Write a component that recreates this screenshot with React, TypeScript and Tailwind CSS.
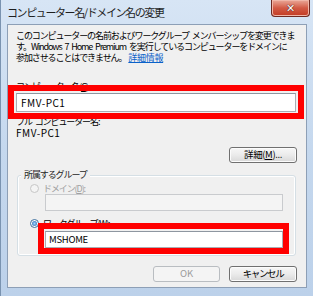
import type { ReactNode } from "react";

const jp = "font-['Noto_Sans_CJK_JP','Noto_Sans',sans-serif]";

function Button({ children, disabled }: { children: ReactNode; disabled?: boolean }) {
  return (
    <div
      className={
        disabled
          ? "w-[67px] h-[16px] rounded-[3px] border border-[#b9bdc1] bg-[#f4f4f4] text-[#9b9b9b] flex items-center justify-center text-[9.5px] leading-none"
          : "w-[68px] h-[16px] rounded-[3px] border border-[#707070] bg-linear-to-b from-[#f7f7f7] via-[#ebebeb] to-[#d8d8d8] text-black flex items-center justify-center text-[9.5px] leading-none shadow-[inset_0_0_0_1px_#fcfcfc]"
      }
    >
      {children}
    </div>
  );
}

function Radio({ checked, disabled }: { checked?: boolean; disabled?: boolean }) {
  if (disabled) {
    return <div className="w-[9px] h-[9px] rounded-full border border-[#c6c6c6] bg-[#f4f4f4]" />;
  }
  return (
    <div className="w-[9px] h-[9px] rounded-full border border-[#3d6f9e] bg-white flex items-center justify-center">
      {checked && <div className="w-[5px] h-[5px] rounded-full bg-radial from-[#9fd4ff] to-[#1b5fa8]" />}
    </div>
  );
}

export default function App() {
  return (
    <div className={`w-[313px] h-[296px] overflow-hidden bg-linear-to-b from-[#d7e5f5] via-[#c5d8ee] to-[#bcd1ea] border-l border-[#7a93b0] ${jp} text-black`}>
      {/* title bar */}
      <div className="h-[24px] flex justify-between">
        <div className="pl-[6px] pt-[5px] text-[11px] leading-[14px] tracking-[-1.4px] text-[#1e1e1e] whitespace-nowrap">
          コンピューター名/ドメイン名の変更
        </div>
        <div className="mr-[3px] w-[39px] h-[17px] rounded-b-[4px] border border-t-0 border-[#6e2a22] bg-linear-to-b from-[#e9a899] via-[#d25a45] to-[#c23a22] flex items-center justify-center shadow-[inset_0_0_0_1px_#f0b6a8]">
          <span className="font-['DejaVu_Sans',sans-serif] text-[11px] leading-none font-bold text-white [text-shadow:0_0_1px_#4a1a14,0_0_1px_#4a1a14]">
            ✕
          </span>
        </div>
      </div>

      {/* client area */}
      <div className="ml-[6px] w-[300px] h-[264px] border border-[#8d9fb6] bg-[#f0f0f0] text-[9px] leading-[11px]">
        <div className="pl-[8px] pt-[5px] tracking-[-1.1px] [word-spacing:2px] whitespace-nowrap">
          <div>このコンピューターの名前およびワークグループ メンバーシップを変更できま</div>
          <div>す。Windows 7 Home Premium を実行しているコンピューターをドメインに</div>
          <div>
            参加させることはできません。
            <span className="ml-[2px] tracking-[-0.3px] text-[#0a62c9] underline">詳細情報</span>
          </div>
        </div>

        <div className="pl-[8px] mt-[18px] tracking-[-1.1px]">
          コンピューター名(<span className="underline">C</span>):
        </div>
        <div className="relative ml-[8px] mt-[1px] w-[280px] h-[19px] border border-[#abadb3] border-t-[#8e96a0] bg-white flex items-center pl-[4px]">
          <span className="text-[10px] tracking-[0.5px]">FMV-PC1</span>
          <div className="absolute -top-[9px] -bottom-[8px] -left-[9px] -right-[9px] border-[6px] border-[#ff0000]" />
        </div>

        <div className="pl-[8px] mt-[4px] tracking-[-1.1px] [word-spacing:2px]">フル コンピューター名:</div>
        <div className="pl-[8px] text-[10px] tracking-[0.5px]">FMV-PC1</div>

        <div className="mt-[9px] pr-[9px] flex justify-end">
          <Button>
            <span className="tracking-[-0.4px]">
              詳細(<span className="underline">M</span>)...
            </span>
          </Button>
        </div>

        {/* group box */}
        <div className="relative ml-[9px] mt-[12px] w-[279px] rounded-[3px] border border-[#d5dfe5] pt-[7px] pb-[7px] shadow-[inset_0_0_0_1px_#ffffff]">
          <div className="absolute -top-[7px] left-[3px] px-[3px] bg-[#f0f0f0] tracking-[-1.1px] text-[#1e1e1e]">
            所属するグループ
          </div>

          <div className="flex items-center h-[11px] pl-[12px]">
            <Radio disabled />
            <span className="ml-[4px] tracking-[-1.1px] text-[#a0a0a0]">
              ドメイン(<span className="underline">D</span>):
            </span>
          </div>
          <div className="ml-[27px] w-[238px] h-[17px] border border-[#c9cbce] bg-[#f4f4f4]" />

          <div className="mt-[7px] flex items-center h-[11px] pl-[12px]">
            <Radio checked />
            <span className="ml-[4px] tracking-[-1.1px]">
              ワークグループ(<span className="underline">W</span>):
            </span>
          </div>
          <div className="relative ml-[27px] mt-[2px] w-[238px] h-[17px] border border-[#abadb3] border-t-[#8e96a0] bg-white flex items-center pl-[3px]">
            <span className="text-[9.5px] tracking-[-0.3px]">MSHOME</span>
            <div className="absolute -top-[9px] -bottom-[7px] -left-[8px] -right-[7px] border-[6px] border-[#ff0000]" />
          </div>
        </div>

        <div className="mt-[10px] pr-[9px] flex justify-end gap-[9px]">
          <Button disabled>OK</Button>
          <Button>
            <span className="tracking-[-1.4px]">キャンセル</span>
          </Button>
        </div>
      </div>
    </div>
  );
}
